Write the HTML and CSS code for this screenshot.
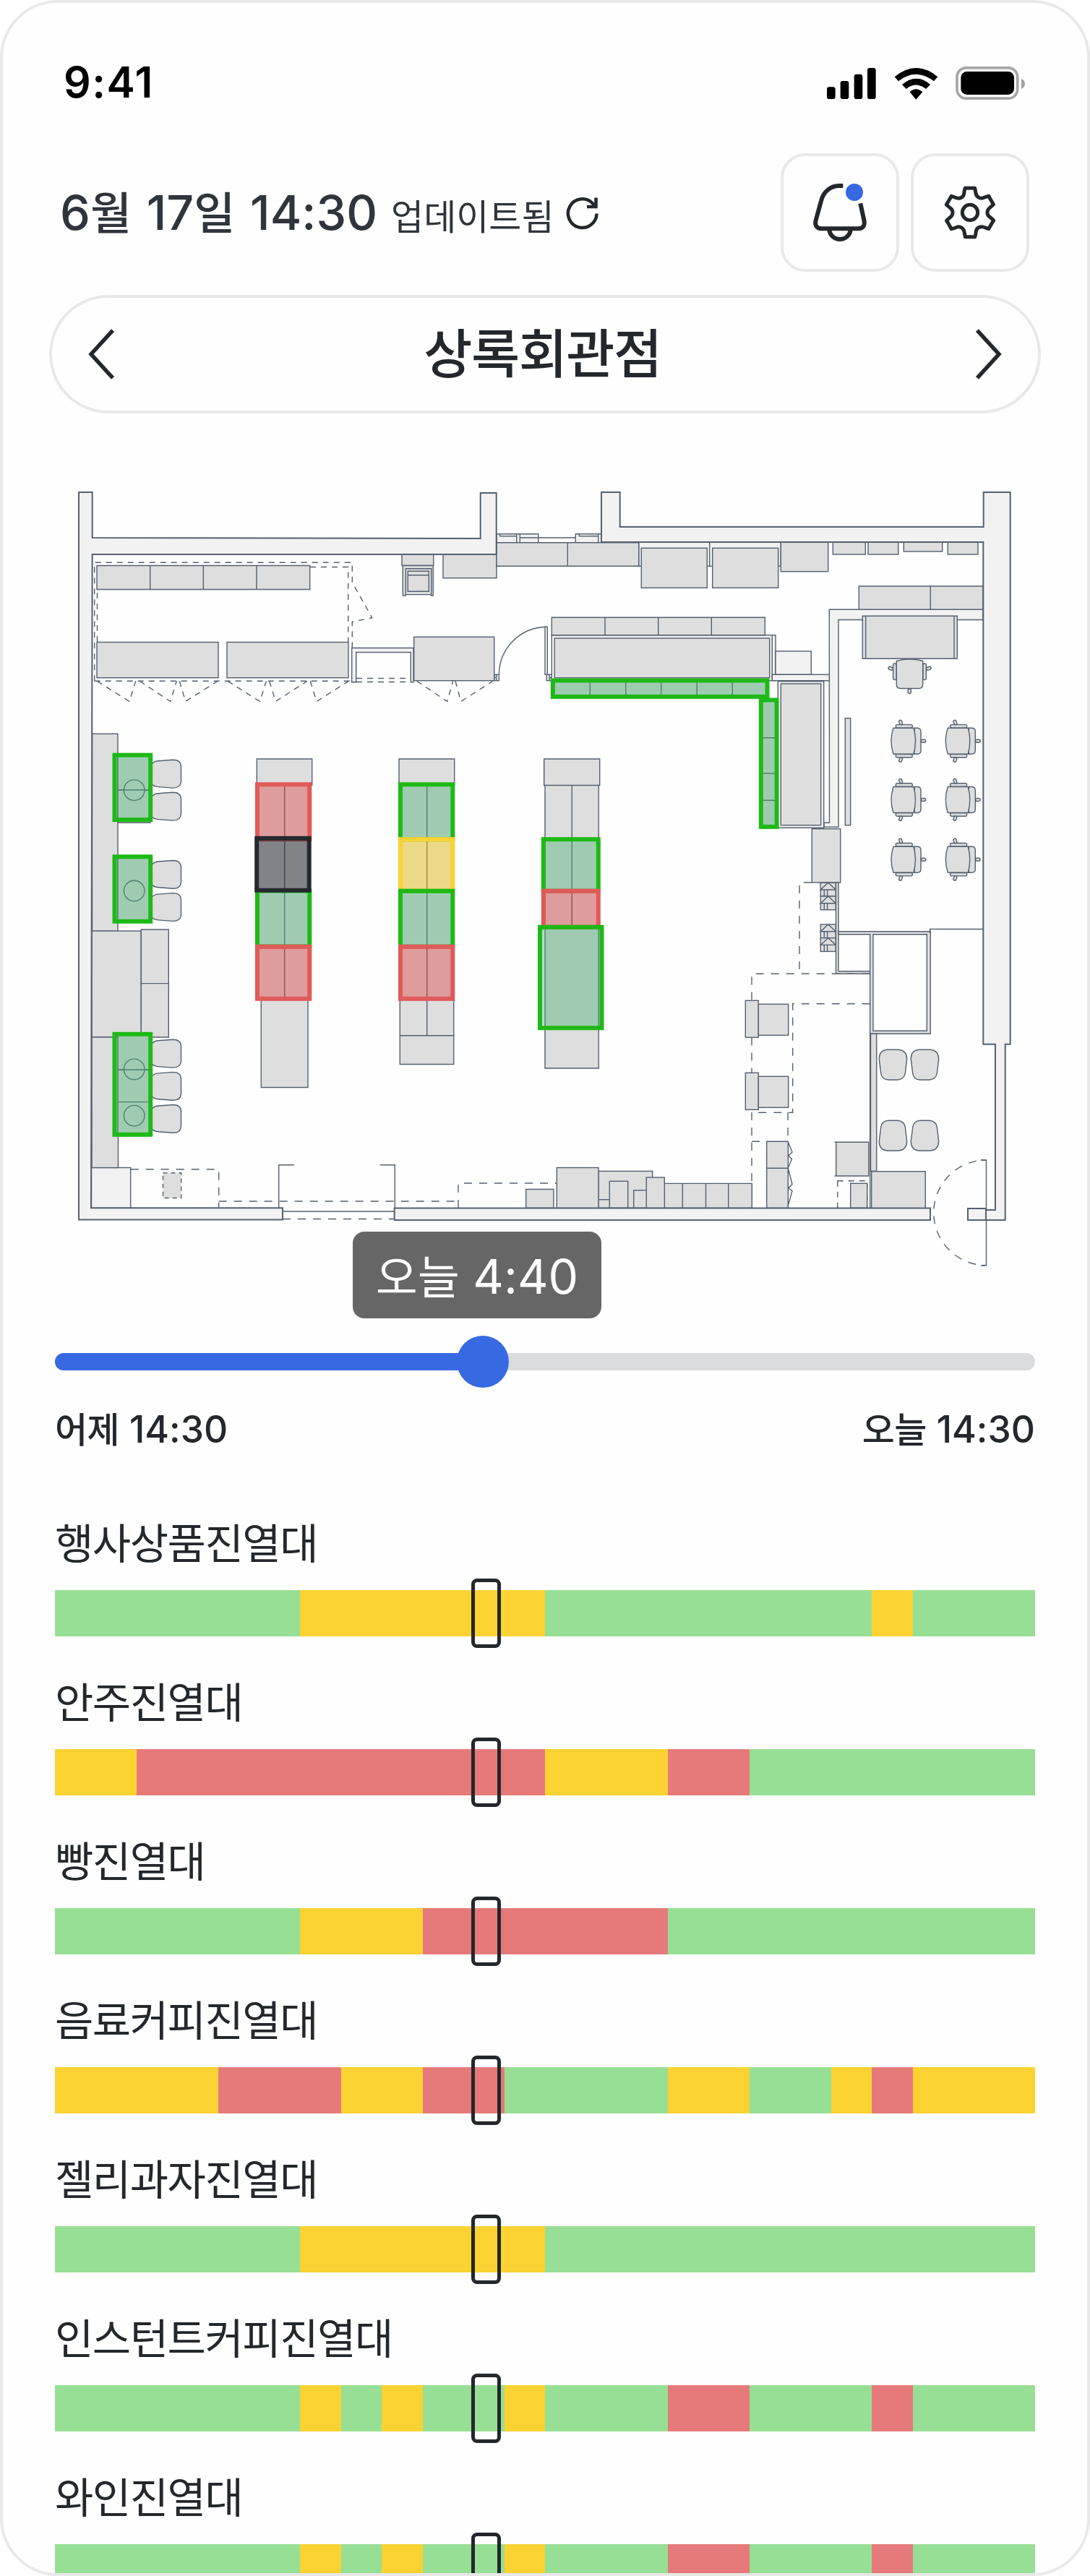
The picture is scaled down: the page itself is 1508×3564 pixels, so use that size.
FILE: index.html
```html
<!DOCTYPE html>
<html lang="ko">
<head>
    <meta charset="UTF-8">
    <title>상록회관점</title>
    <link rel="stylesheet" href="styles.css">
</head>
<body>
    <div class="phone">
        <div class="status-bar">
            <span class="clock">9:41</span>
            <svg class="status-icons" viewBox="222 36 822 138">
                <rect x="222" y="121" width="35" height="50" rx="10"/>
                <rect x="278" y="96" width="35" height="75" rx="10"/>
                <rect x="335" y="68" width="35" height="103" rx="10"/>
                <rect x="390" y="42" width="35" height="129" rx="10"/>
                <path d="M503 79Q592 5 682 79L666 97Q592 40 519 97Z"/>
                <path d="M534 111Q592 61 651 111L633 129Q592 96 551 129Z"/>
                <path d="M566 142Q592 117 619 142L592 173Z"/>
                <rect class="battery" x="762" y="41.500" width="251" height="127" rx="38"/>
                <rect x="778" y="57" width="221" height="96" rx="25"/>
                <path class="battery-cap" d="M1029 87Q1044 94 1044 108Q1044 122 1029 129Z"/>
            </svg>
        </div>

        <div class="header">
            <div class="updated">
                <span class="date">6<b>월</b> 17<b>일</b> 14:30</span>
                <span class="updated-text">업데이트됨</span>
                <svg class="refresh" viewBox="0 0 48 48">
                    <path d="M43.500 24.500A19.800 19.800 0 1 1 37.500 10L41.500 14"/>
                    <path d="M42.500 2.500V15H30"/>
                </svg>
            </div>
            <div class="actions">
                <button class="icon-btn">
                    <svg viewBox="42 408 468 468">
                        <g class="bell">
                            <path d="M289 531H275C237 531 207 556 198 594L175 678Q171 709 202 709H350Q381 709 377 678L361 604"/>
                            <path d="M232 711A44 42 0 0 0 320 711"/>
                        </g>
                        <circle class="bell-dot" cx="336" cy="558" r="36"/>
                    </svg>
                </button>
                <button class="icon-btn">
                    <svg viewBox="582 408 468 468">
                        <defs>
                            <path id="tooth" d="M-20-101H20L24-80C26-66 41-55 55-60.600C63-64 71-68 77.500-67.800"/>
                        </defs>
                        <g class="gear" transform="translate(816 642)">
                            <use href="#tooth"/>
                            <use href="#tooth" transform="rotate(60)"/>
                            <use href="#tooth" transform="rotate(120)"/>
                            <use href="#tooth" transform="rotate(180)"/>
                            <use href="#tooth" transform="rotate(240)"/>
                            <use href="#tooth" transform="rotate(300)"/>
                            <circle r="32"/>
                        </g>
                    </svg>
                </button>
            </div>
        </div>

        <div class="store-select">
            <svg class="chevron" viewBox="0 0 36 72"><path d="M34 3L4 36L34 69"/></svg>
            <span class="store-name">상록회관점</span>
            <svg class="chevron" viewBox="0 0 36 72"><path d="M2 3L32 36L2 69"/></svg>
        </div>

        <svg class="floor-map" viewBox="94 660 1320 1100">
            <defs>
                <path id="seat" d="M-2 8Q2 2 9 1.500L29 0Q40 0 40.500 9V30Q40 39 29 38.800L9 37.300Q2 37-2 31Z"/>
                <path id="stool" d="M11 0H27Q38 1 38.400 13L36 33Q34 41.500 25 41.700H13Q4 41.500 2.500 33L0 13Q0 1 11 0Z"/>
                <g id="office-chair">
                    <path d="M32 0H36Q41 0 41 5V31Q41 36 36 36H32Z"/>
                    <path d="M3 0H31Q36 18 31 36H3Q-3 18 3 0Z"/>
                    <rect x="6.300" y="-4.700" width="23" height="4.400" rx="2"/>
                    <rect x="6.300" y="36.300" width="23" height="4.400" rx="2"/>
                    <rect x="41.300" y="16" width="6.500" height="4" rx="2"/>
                    <rect x="11" y="-11" width="4" height="6.500" rx="2" transform="rotate(-18 13 -8)"/>
                    <rect x="11" y="40.500" width="4" height="6.500" rx="2" transform="rotate(18 13 44)"/>
                </g>
                <g id="step">
                    <rect width="21" height="18.700"/>
                    <path d="M0 9.700L10.500 0L21 9.700ZM5 10V18.700M9.300 10V18.700"/>
                </g>
            </defs>

            <!-- thin partitions and fixtures -->
            <g class="fixture-light">
                <path d="M1147.300 843.300H1360V857.500H1160V1144.300H1140V1138.300H1147.500Z"/>
                <path d="M486.700 943.700V896.500H572V943.700H568.300V902.500H492.700V943.700Z"/>
                <rect x="883.700" y="750" width="196.600" height="33.300"/>
                <path d="M981.700 750V783"/>
                <rect x="763.300" y="878.700" width="309.700" height="63"/>
                <path d="M1068.300 878.700V941.700"/>
                <rect x="1073" y="901" width="49.300" height="32.300"/>
                <rect x="1068.300" y="933.300" width="79" height="8.400"/>
                <rect x="1076.300" y="942.700" width="63.400" height="202.600"/>
                <path d="M687 738.700H744.700V750.700H687ZM714.700 739V750M719.300 739V750M691.700 739V741.700H714.700M719 744H796.700"/>
                <path d="M796.300 738.700H832V750.700H796.300ZM827.700 739V750M801.300 739V741.700H827.700"/>
                <rect x="683.700" y="933.300" width="6.600" height="8.400"/>
                <rect x="756.300" y="933.300" width="7" height="8.400"/>
                <path d="M686.700 933V941M683.700 937.500H687M760 933V941M760 937.500H763"/>
                <rect x="754" y="867.300" width="3.300" height="66"/>
                <rect x="126.500" y="1615.500" width="54.200" height="56"/>
            </g>
            <path class="line" d="M690.300 933.300C691 898 718 868 756.700 867.300"/>

            <g class="fixture">
                <!-- storage, top left -->
                <path d="M134 782.500H428.700V815.500H134ZM207.700 782.500V815.500M281.300 782.500V815.500M355 782.500V815.500"/>
                <rect x="134" y="888.500" width="168" height="49.200"/>
                <rect x="314" y="888.500" width="168" height="49.200"/>
                <rect x="556" y="767" width="43.700" height="15.500"/>
                <path d="M557.300 782.500H599.300V824H596.300V822.600H561.300V824H557.300ZM561.300 822.600V786.700H596.700V822.600"/>
                <path d="M564.300 790.300H593.300V818.300H564.300ZM564.300 795.700H593.300"/>
                <rect x="613" y="767" width="74" height="32.700"/>
                <rect x="572.700" y="881.300" width="111" height="60.400"/>

                <!-- back wall -->
                <path d="M687 750.700H883.700V783.300H687ZM785.300 750.700V783.300"/>
                <rect x="887.300" y="758.300" width="91" height="55"/>
                <rect x="985.700" y="758.300" width="91" height="55"/>
                <rect x="1080.300" y="750" width="65.400" height="40.700"/>
                <rect x="1152.300" y="750" width="45" height="17"/>
                <rect x="1201" y="750" width="41.700" height="17"/>
                <rect x="1250.300" y="750" width="53.400" height="13"/>
                <rect x="1311.300" y="750" width="41.700" height="17"/>
                <path d="M1188.300 811H1360V843.300H1188.300ZM1287.300 811V843.300"/>

                <!-- counter -->
                <path d="M763.300 854.300H1058.300V878.700H763.300ZM837 854.300V878.700M910.700 854.300V878.700M984.300 854.300V878.700"/>
                <rect x="767.300" y="883" width="297.400" height="54.700"/>
                <rect x="1080.300" y="946" width="55.400" height="195.700"/>
                <path d="M764 940H1063V964H764ZM816.300 940V964M865.700 940V964M914.700 940V964M964.200 940V964M1013.300 940V964"/>
                <path d="M1052.500 968H1074.500V1144H1052.500ZM1052.500 1020.700H1074M1052.500 1070H1074M1052.500 1107.300H1074"/>

                <!-- office -->
                <path d="M1193.300 852.300H1324.300V911.300H1193.300ZM1197.700 852.300V911.300M1320 852.300V911.300"/>
                <path d="M1240.300 914.500Q1258.500 909.500 1276.700 914.500V947Q1276.700 952.500 1271 952.500H1246Q1240.300 952.500 1240.300 947Z"/>
                <rect x="1235.700" y="918" width="4.300" height="22.600" rx="2"/>
                <rect x="1277" y="918" width="4.300" height="22.600" rx="2"/>
                <rect x="1256.300" y="953" width="4" height="6.500" rx="2"/>
                <rect x="1229" y="922.700" width="6.500" height="4" rx="2" transform="rotate(18 1232 924.700)"/>
                <rect x="1281.500" y="922.700" width="6.500" height="4" rx="2" transform="rotate(-18 1285 924.700)"/>
                <use href="#office-chair" x="1233" y="1007.300"/>
                <use href="#office-chair" x="1308.300" y="1007.300"/>
                <use href="#office-chair" x="1233" y="1088.500"/>
                <use href="#office-chair" x="1308.300" y="1088.500"/>
                <use href="#office-chair" x="1233" y="1171.200"/>
                <use href="#office-chair" x="1308.300" y="1171.200"/>
                <rect x="1169.300" y="993.700" width="7.400" height="148"/>
                <rect x="1123.300" y="1146.700" width="39.400" height="74.300"/>
                <use href="#step" x="1135.300" y="1221.300"/>
                <use href="#step" x="1135.300" y="1240"/>
                <use href="#step" x="1135.300" y="1279"/>
                <use href="#step" x="1135.300" y="1297.700"/>
                <path d="M1156.500 1221H1160V1343.700H1203.700V1347.300H1156.500Z"/>
                <path d="M1160 1288.700H1287.300V1430.300H1203.700V1292.700H1160ZM1208 1292.700V1426.300H1282.300V1292.700Z" fill-rule="evenodd"/>
                <path d="M1286.500 1291V1285.500H1360" fill="none"/>
                <rect x="1204.500" y="1430.300" width="8.200" height="190"/>
                <path d="M1203.700 1430V1671"/>
                <rect x="1205.700" y="1620.700" width="74.600" height="51"/>
                <use href="#stool" x="1216.300" y="1452.300"/>
                <use href="#stool" x="1260.300" y="1452.300"/>
                <use href="#stool" transform="translate(1216.300 1592) scale(1 -1)"/>
                <use href="#stool" transform="translate(1260.300 1592) scale(1 -1)"/>

                <!-- left wall tables -->
                <rect x="127.500" y="1015.300" width="35.500" height="273"/>
                <rect x="127" y="1288" width="68.300" height="147"/>
                <path d="M195.300 1286H233.300V1435H195.300ZM195.300 1360.600H233"/>
                <rect x="127" y="1435" width="36.500" height="180.500"/>
                <use href="#seat" x="210" y="1051.300"/>
                <use href="#seat" x="210" y="1096.300"/>
                <use href="#seat" x="210" y="1190.500"/>
                <use href="#seat" x="210" y="1235.600"/>
                <use href="#seat" x="210" y="1438.300"/>
                <use href="#seat" x="210" y="1483.400"/>
                <use href="#seat" x="210" y="1528.500"/>
                <path d="M163 1046H208V1138.300H163ZM163 1093H208"/>
                <rect x="163" y="1186" width="45" height="88"/>
                <path d="M163 1432H208V1569H163ZM163 1480H208M163 1524.600H208"/>
                <circle cx="185.700" cy="1093.200" r="14.300"/>
                <circle cx="185.700" cy="1232.500" r="14.300"/>
                <circle cx="185.700" cy="1479.400" r="14.300"/>
                <circle cx="185.700" cy="1543.700" r="14.300"/>
                <path d="M163 1093H208M163 1480H208" />

                <!-- aisle shelves -->
                <path d="M355.300 1050H431.700V1086.500H355.300ZM357 1086.500H428.500V1382H357ZM393.700 1086.500V1382M361.300 1382H426V1504.500H361.300Z"/>
                <path d="M552 1050H628.700V1086.500H552ZM553.300 1086.500H627.700V1472.500H553.300ZM590.700 1086.500V1433M553.300 1432.800H627.700"/>
                <path d="M752.700 1050H829.700V1086.500H752.700ZM754 1086.500H828.300V1478H754ZM791.300 1086.500V1282"/>

                <!-- front counter -->
                <rect x="727.700" y="1645.400" width="38.300" height="26"/>
                <rect x="828" y="1620.400" width="74.700" height="51"/>
                <path d="M828 1659.700H843"/>
                <rect x="770.300" y="1615.500" width="57.700" height="56"/>
                <rect x="843.300" y="1634.300" width="25.400" height="37"/>
                <rect x="876.700" y="1646.800" width="18" height="24.500"/>
                <path d="M919.300 1637.400H1040.300V1671.500H919.300ZM944.300 1637.400V1671M976.500 1637.400V1671M1007.700 1637.400V1671"/>
                <rect x="894.300" y="1629" width="25" height="42.500"/>
                <rect x="1176.700" y="1637.300" width="23" height="34"/>
                <path d="M1156.700 1580.300H1201.700V1627H1156.700ZM1154.500 1580.300H1157M1154.500 1627H1157"/>
                <path d="M1060.700 1579.300H1090.300V1671.500H1060.700ZM1060.700 1616.300H1090.300"/>
            </g>
            <path class="line" d="M1090.300 1580L1096 1594L1090.700 1599L1095.500 1603.500L1090.300 1616L1096 1638.500L1090.700 1643.700L1096 1647.500L1090.300 1668"/>

            <g class="dashed">
                <path d="M130.700 942.300V778.300H487.300V805.700L514.700 854.700L487.300 860.300V896"/>
                <path d="M134.500 888V815.500M429 784.500H481.700V888.500"/>
                <path d="M130.700 942.300H486.700M493 938.500H567M493 943.500H567"/>
                <path d="M134.300 942.300L179 970.500L187.700 942.300M193.300 942.300L235.700 970.500L244.300 942.300M248.300 942.300L256.700 970.500L301 942.300"/>
                <path d="M315 942.300L359.700 970.500L368.300 942.300M372.700 942.300L381.300 970.500L425 942.300M429.300 942.300L438 970.500L482.300 942.300"/>
                <path d="M576.700 942.300L618.700 970.500L626.700 942.300M630 942.300L637.700 970.500L681.700 942.300"/>
                <rect x="1158.700" y="1633.700" width="41" height="38" fill="none"/>
            </g>
            <g class="dashed dashed-wide">
                <path d="M180.700 1617.700H302.700V1671M302.700 1662H634M634 1671V1637H770"/>
                <path d="M391 1686.500H546"/>
                <path d="M1123 1221H1106V1347.300M1203.700 1347.300H1040V1384M1040 1435.500V1484M1040 1539V1637"/>
                <path d="M1203.700 1388.700H1096.700V1539.300H1040M1090 1539V1579.300M1040 1579.300H1060"/>
                <path d="M1357.300 1605H1364.500A72.850 72.850 0 0 0 1364.500 1750.700H1357.300"/>
            </g>
            <rect class="fixture dashed" x="225.500" y="1622.700" width="25.200" height="34.800"/>
            <path class="line" d="M385.700 1671V1611.800H407M546.300 1671V1611.800H525.700M391 1676H546M1357.300 1605H1364.500V1750.700H1357.300"/>

            <g class="fixture">
                <rect x="1031.300" y="1384.300" width="18" height="51"/>
                <rect x="1049.300" y="1389.300" width="41.400" height="43"/>
                <rect x="1031.300" y="1484.300" width="18" height="51"/>
                <rect x="1049.300" y="1489.300" width="41.400" height="43"/>
            </g>

            <g class="wall">
                <path d="M109 681H127.700V744L664.700 745V682H686.700V767H127.700L126 1671.300H391V1687.400H109Z"/>
                <path d="M832 681H857.700V729H1360.700V681H1397.700V1444.700H1390.700V1688H1339V1672H1364V1674H1377V1444.700H1360.300V750H832Z"/>
                <path d="M545.700 1671.500H1287V1688H545.700Z"/>
                <path d="M1364 1672V1688"/>
            </g>

            <!-- shelf zones -->
            <g class="zone good">
                <rect x="158.500" y="1044.700" width="49.700" height="89.500"/>
                <rect x="158.500" y="1185.300" width="49.700" height="89.500"/>
                <rect x="158.500" y="1430.800" width="49.700" height="139"/>
                <rect x="764.800" y="941.500" width="296.700" height="22.400"/>
                <rect x="1052.800" y="968.500" width="21.800" height="175.400"/>
                <rect x="356" y="1232.500" width="72.300" height="77"/>
                <rect x="554" y="1085.300" width="72.300" height="76"/>
            </g>
            <g class="zone bad">
                <rect x="356" y="1085.300" width="72.300" height="76"/>
                <rect x="356" y="1309.800" width="72.300" height="72"/>
            </g>
            <rect class="zone fair" x="554" y="1161.200" width="72.300" height="71.500"/>
            <rect class="zone good" x="554" y="1232.700" width="72.300" height="77"/>
            <rect class="zone bad" x="554" y="1309.800" width="72.300" height="72"/>
            <rect class="zone good" x="751.800" y="1161.200" width="76" height="71.500"/>
            <rect class="zone bad" x="751.800" y="1232.700" width="76" height="50"/>
            <rect class="zone good" x="747" y="1282.700" width="85.500" height="139.500"/>
            <rect class="zone selected" x="355.200" y="1159.800" width="72.500" height="72"/>
        </svg>

        <div class="timeline">
            <div class="tooltip"><b>오늘</b> 4:40</div>
            <div class="track">
                <div class="track-fill"></div>
                <div class="thumb"></div>
            </div>
            <div class="range">
                <span><b>어제</b> 14:30</span>
                <span><b>오늘</b> 14:30</span>
            </div>
        </div>

        <div class="shelves" id="shelves"></div>
    </div>

    <script>
        // g = good, f = fair, b = bad, the number is the length in hours
        const shelves = [
            { name: "행사상품진열대", hours: "g6 f6 g8 f1 g3" },
            { name: "안주진열대", hours: "f2 b10 f3 b2 g7" },
            { name: "빵진열대", hours: "g6 f3 b6 g9" },
            { name: "음료커피진열대", hours: "f4 b3 f2 b2 g4 f2 g2 f1 b1 f3" },
            { name: "젤리과자진열대", hours: "g6 f6 g12" },
            { name: "인스턴트커피진열대", hours: "g6 f1 g1 f1 g2 f1 g3 b2 g3 b1 g3" },
            { name: "와인진열대", hours: "g6 f1 g1 f1 g2 f1 g3 b2 g3 b1 g3" }
        ];

        function showShelves() {
            let output = "";
            shelves.forEach(shelf => {
                const parts = shelf.hours.split(" ").map(part =>
                    `<i class="seg ${part[0]}" style="width:${part.slice(1) / 24 * 100}%"></i>`
                ).join("");
                output += `
                    <div class="shelf">
                        <div class="shelf-name">${shelf.name}</div>
                        <div class="bar">${parts}<div class="marker"></div></div>
                    </div>
                `;
            });
            document.getElementById("shelves").innerHTML = output;
        }

        showShelves();
    </script>
</body>
</html>
```

FILE: styles.css
```css
* {
    box-sizing: border-box;
}
body {
    margin: 0;
    background-color: #fff;
    color: #24272c;
    font-family: Inter, "Noto Sans CJK KR", sans-serif;
}
b {
    font-family: "Noto Sans CJK KR", sans-serif;
    font-weight: inherit;
}
.phone {
    width: 1508px;
    height: 3564px;
    border: 4px solid #e8e8e8;
    border-radius: 80px;
    background-color: #fefefe;
    overflow: hidden;
}

/* status bar */
.status-bar {
    display: flex;
    justify-content: space-between;
    align-items: flex-start;
    height: 208px;
    padding: 14px 86px 0 84px;
}
.clock {
    margin-top: 61px;
    font-size: 59px;
    font-weight: 600;
    line-height: 70px;
    letter-spacing: 1.5px;
    color: #000;
}
.status-icons {
    width: 274px;
    height: 46px;
    margin-top: 74px;
}
.battery {
    fill: none;
    stroke: #a6a6a6;
    stroke-width: 11;
}
.battery-cap {
    fill: #a0a0a0;
}

/* header */
.header {
    display: flex;
    justify-content: space-between;
    align-items: center;
    height: 164px;
    padding: 0 80px 0 79px;
}
.updated {
    display: flex;
    align-items: baseline;
    padding-bottom: 4px;
    color: #30343b;
}
.date {
    font-size: 66.5px;
    font-weight: 500;
    line-height: 80px;
    word-spacing: 3px;
}
.date b {
    font-size: 62px;
}
.updated-text {
    margin-left: 19px;
    font-size: 49px;
}
.refresh {
    width: 48px;
    height: 48px;
    margin: 6px 0 0 16px;
    align-self: center;
    fill: none;
    stroke: #24272c;
    stroke-width: 4.5;
}
.actions {
    display: flex;
    gap: 16px;
}
.icon-btn {
    width: 164px;
    height: 164px;
    padding: 0;
    border: 4px solid #e8e8e8;
    border-radius: 34px;
    background: none;
}
.icon-btn svg {
    display: block;
    width: 156px;
    height: 156px;
}
.bell {
    fill: none;
    stroke: #24272c;
    stroke-width: 18;
}
.bell-dot {
    fill: #3769e2;
}
.gear {
    fill: none;
    stroke: #24272c;
    stroke-width: 15;
    stroke-linecap: round;
    stroke-linejoin: round;
}

/* store select */
.store-select {
    display: flex;
    justify-content: space-between;
    align-items: center;
    width: 1372px;
    height: 164px;
    margin: 32px auto 0;
    padding: 0 50px;
    border: 4px solid #e8e8e8;
    border-radius: 82px;
}
.chevron {
    width: 36px;
    height: 72px;
    fill: none;
    stroke: #24272c;
    stroke-width: 5.5;
}
.store-name {
    margin-right: 7px;
    font-size: 73px;
    font-weight: 500;
    letter-spacing: -1.5px;
    line-height: 100px;
}

/* floor map */
.floor-map {
    display: block;
    width: 1320px;
    height: 1100px;
    margin: 88px auto 0;
}
.floor-map g,
.floor-map .line,
.floor-map .fixture {
    stroke: #556070;
    stroke-width: 1.4;
}
.floor-map .line {
    fill: none;
}
.floor-map .wall {
    fill: #f2f2f2;
    stroke-width: 2;
}
.fixture {
    fill: #dedede;
}
.fixture-light {
    fill: #f2f2f2;
}
.dashed {
    fill: none;
    stroke-dasharray: 8 7;
}
.dashed-wide {
    stroke-dasharray: 11 10;
}
.fixture.dashed {
    fill: #dedede;
    stroke-dasharray: 6 5;
}
.floor-map .zone {
    stroke-width: 6;
    fill-opacity: 0.4;
}
.floor-map .good {
    fill: #40b16e;
    stroke: #1eb917;
}
.floor-map .fair {
    fill: #ffd205;
    stroke: #fad232;
}
.floor-map .bad {
    fill: #de3939;
    stroke: #e05a5a;
}
.floor-map .selected {
    fill: #25282d;
    fill-opacity: 0.5;
    stroke: #25282d;
}

/* timeline slider */
.timeline {
    position: relative;
    margin: 112px 72px 0;
}
.tooltip {
    position: absolute;
    left: 412px;
    top: -168px;
    width: 344px;
    height: 120px;
    border-radius: 16px;
    background-color: #666;
    color: #fff;
    font-size: 66px;
    line-height: 118px;
    text-align: center;
    white-space: nowrap;
}
.tooltip b {
    font-size: 63px;
}
.track {
    position: relative;
    height: 24px;
    border-radius: 12px;
    background-color: #dadbdd;
}
.track-fill {
    width: 592px;
    height: 24px;
    border-radius: 12px;
    background-color: #3769e2;
}
.thumb {
    position: absolute;
    top: -24px;
    left: 556px;
    width: 72px;
    height: 72px;
    border-radius: 50%;
    background-color: #3769e2;
}
.range {
    display: flex;
    justify-content: space-between;
    height: 68px;
    margin-top: 46px;
    font-size: 51.5px;
    font-weight: 500;
    line-height: 66px;
}
.range b {
    font-size: 49px;
    letter-spacing: -0.5px;
}

/* shelf history */
.shelves {
    margin: 86px 72px 0;
}
.shelf {
    height: 220px;
}
.shelf-name {
    height: 104px;
    padding-top: 5px;
    font-size: 58px;
    line-height: 70px;
    letter-spacing: -1.5px;
}
.bar {
    position: relative;
    display: flex;
    height: 64px;
}
.seg.g {
    background-color: #97df94;
}
.seg.f {
    background-color: #fad232;
}
.seg.b {
    background-color: #e67a7a;
}
.marker {
    position: absolute;
    top: -16px;
    left: 576px;
    width: 41px;
    height: 96px;
    border: 5px solid #24272c;
    border-radius: 8px;
}
```
